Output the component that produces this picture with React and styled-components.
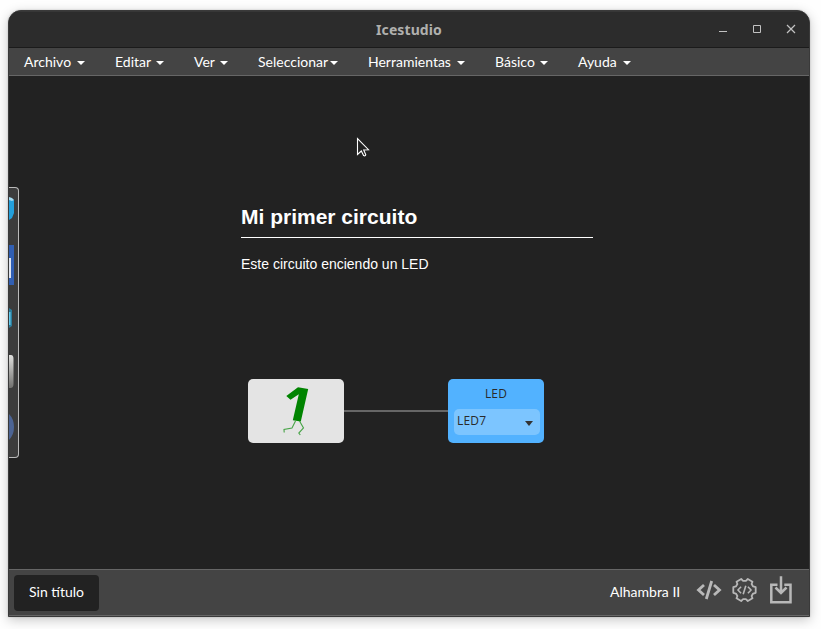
import React from "react";
import styled, { createGlobalStyle } from "styled-components";

const GlobalStyle = createGlobalStyle`
  * { box-sizing: border-box; }
  body {
    margin: 0;
    background: #fefefe;
    overflow: hidden;
    font-family: Lato, sans-serif;
    font-size: 14px;
    color: #fff;
  }
`;

const Desktop = styled.div`
  width: 821px;
  height: 629px;
  padding: 10px 11px 12px 8px;
`;

const Window = styled.main`
  display: flex;
  flex-direction: column;
  width: 802px;
  height: 607px;
  overflow: hidden;
  border: 1px solid #3a3a3a;
  border-radius: 13px 13px 0 0;
  background: #222;
  box-shadow: 0 3px 12px rgba(0, 0, 0, 0.22), 0 0 2px rgba(0, 0, 0, 0.2);
`;

const TitleBar = styled.header`
  display: grid;
  grid-template-columns: 1fr auto 1fr;
  align-items: center;
  height: 37px;
  flex: none;
  background: #2c2c2c;
  border-top: 1px solid #373737;
  border-bottom: 1px solid #1b1b1b;
`;

const WindowTitle = styled.h1`
  grid-column: 2;
  margin: 0;
  font: 700 14px/20px "Noto Sans", sans-serif;
  letter-spacing: 0.1px;
  color: #b0b0ae;
`;

const WindowControls = styled.div`
  display: flex;
  justify-content: flex-end;
  gap: 20px;
  padding-right: 11px;
  margin-top: -2px;
`;

const MenuBar = styled.nav`
  display: flex;
  align-items: center;
  gap: 30px;
  height: 28px;
  flex: none;
  padding-left: 15px;
  background: #444;
  border-bottom: 1px solid #666;
`;

const MenuItem = styled.div`
  display: flex;
  align-items: center;
  justify-content: space-between;
  width: ${(p) => p.$width}px;
  line-height: 20px;
  white-space: nowrap;
`;

const Caret = styled.span`
  width: 0;
  height: 0;
  flex: none;
  margin-top: 2px;
  border: 4px solid transparent;
  border-top-color: ${(p) => p.$color || "#fff"};
  border-bottom: 0;
`;

const Canvas = styled.section`
  position: relative;
  flex: 1;
  background: #222;
`;

const Drawer = styled.aside`
  position: absolute;
  left: 0;
  top: 111px;
  width: 10px;
  height: 271px;
  border: 1px solid #bbb;
  border-left: 0;
  border-radius: 0 4px 4px 0;
  background: #3c3c3c;
  overflow: hidden;
`;

const Note = styled.article`
  position: absolute;
  left: 232px;
  top: 129px;
  width: 352px;
  font-family: "Liberation Sans", Arial, sans-serif;
`;

const NoteHeading = styled.h2`
  margin: 0;
  padding-bottom: 8px;
  border-bottom: 1px solid #fff;
  font-size: 21px;
  line-height: 24px;
`;

const NoteText = styled.p`
  margin: 16px 0 0;
  font-size: 14px;
  line-height: 20px;
`;

const Wire = styled.div`
  position: absolute;
  left: 335px;
  top: 334px;
  width: 104px;
  height: 2px;
  background: #666;
`;

const Block = styled.div`
  position: absolute;
  left: ${(p) => p.$left}px;
  top: 303px;
  width: 96px;
  height: 64px;
  padding: 5px;
  border-radius: 5px;
  background: ${(p) => p.$color};
  font-family: "Open Sans", sans-serif;
  font-size: 12px;
  letter-spacing: 0.2px;
  color: #2a2a2a;
`;

const BlockLabel = styled.div`
  height: 20px;
  line-height: 20px;
  text-align: center;
`;

const PinSelect = styled.div`
  display: flex;
  align-items: center;
  justify-content: space-between;
  width: 86px;
  height: 26px;
  margin: 5px 0 0 1px;
  padding: 0 7px 3px 3px;
  border-radius: 5px;
  background: #7cc5ff;
`;

const PinArrow = styled(Caret)`
  margin-top: 5px;
  border-top-width: 5px;
`;

const Pointer = styled.svg`
  position: absolute;
  left: 347px;
  top: 61px;
`;

const Footer = styled.footer`
  display: flex;
  align-items: center;
  justify-content: space-between;
  height: 47px;
  flex: none;
  padding: 0 17px 0 5px;
  background: #444;
  border-top: 1px solid #666;
  border-bottom: 1px solid #666;
`;

const ProjectTab = styled.div`
  width: 85px;
  height: 36px;
  border-radius: 4px;
  background: #222;
  line-height: 34px;
  text-align: center;
`;

const Tools = styled.div`
  display: flex;
  align-items: center;
  height: 100%;
`;

const BoardName = styled.span`
  width: 70px;
  margin: 0 16px 1px 0;
  line-height: 20px;
  white-space: nowrap;
`;

const ToolIcon = styled.svg`
  display: block;
  flex: none;
  margin-right: ${(p) => p.$gap || 0}px;
  margin-bottom: 6px;
`;

const MENUS = [
  ["Archivo", 61],
  ["Editar", 49],
  ["Ver", 34],
  ["Seleccionar", 80],
  ["Herramientas", 97],
  ["Básico", 53],
  ["Ayuda", 53],
];

function Controls() {
  return (
    <WindowControls>
      <svg width="14" height="14" fill="none" stroke="#c2c2c2">
        <path d="M3 9.5h8" />
      </svg>
      <svg width="14" height="14" fill="none" stroke="#c2c2c2">
        <path d="M3.5 3.5h7v7h-7z" />
      </svg>
      <svg width="14" height="14" fill="none" stroke="#c2c2c2" strokeWidth="1.2">
        <path d="M3 3l8 8M11 3l-8 8" />
      </svg>
    </WindowControls>
  );
}

function DrawerIcons() {
  return (
    <svg width="9" height="269" viewBox="0 0 9 269" display="block">
      <defs>
        <linearGradient id="metal" x2="0" y2="1">
          <stop stopColor="#e0e0de" />
          <stop offset="1" stopColor="#70706e" />
        </linearGradient>
      </defs>
      <path d="M0 10l5 2v13l-2 5-3 2z" fill="#23a0dc" />
      <path d="M0 9l3 1 2 2-2 1-3-1z" fill="#a4daf0" />
      <path d="M0 57h5v40h-5z" fill="#315fb3" />
      <path d="M0 70h2v20h-2z" fill="#dfe4ee" />
      <path d="M0 120l3 2v16l-3 2z" fill="#2c7d9c" />
      <path d="M0 124h1.5v13h-1.5z" fill="#65cdf0" />
      <path d="M-3 167h5q2.500 0 2.500 4v25q0 4-3 4h-5z" fill="url(#metal)" />
      <path d="M0 226q5 5 5 13t-5 13z" fill="#4c6494" />
    </svg>
  );
}

function RunningOne() {
  return (
    <svg width="86" height="56" viewBox="5 5 86 56" display="block">
      <path
        d="M38.300 17L50 8.200l10.200 1.800-7.400 32.500-8-1.300L50.800 15.200l-8.300 5.500z"
        fill="#008400"
      />
      <path
        d="M47.500 42l-3.500 7-8 1.500.2 3M51.500 42l4 7-4.700 5 1.500 2"
        fill="none"
        stroke="#46a346"
        strokeWidth="1.1"
      />
    </svg>
  );
}

export default function App() {
  return (
    <Desktop>
      <GlobalStyle />
      <Window>
        <TitleBar>
          <WindowTitle>Icestudio</WindowTitle>
          <Controls />
        </TitleBar>
        <MenuBar>
          {MENUS.map(([label, width]) => (
            <MenuItem key={label} $width={width}>
              {label}
              <Caret />
            </MenuItem>
          ))}
        </MenuBar>
        <Canvas>
          <Drawer>
            <DrawerIcons />
          </Drawer>
          <Note>
            <NoteHeading>Mi primer circuito</NoteHeading>
            <NoteText>Este circuito enciendo un LED</NoteText>
          </Note>
          <Wire />
          <Block $left={239} $color="#e4e4e4">
            <RunningOne />
          </Block>
          <Block $left={439} $color="#52b2ff">
            <BlockLabel>LED</BlockLabel>
            <PinSelect>
              LED7
              <PinArrow $color="#333" />
            </PinSelect>
          </Block>
          <Pointer width="16" height="22">
            <path
              d="M1.500 1.500v16l3.800-3.500 2.300 4.500q1.800 1 2.200-.8L7.700 13l4.800-.3z"
              fill="#222"
              stroke="#fff"
              strokeWidth="1.1"
            />
          </Pointer>
        </Canvas>
        <Footer>
          <ProjectTab>Sin título</ProjectTab>
          <Tools>
            <BoardName>Alhambra II</BoardName>
            <ToolIcon $gap={10} width="26" height="22" fill="none" stroke="#b8b8b8" strokeWidth="2.800">
              <path d="M8 6L2.500 11 8 16M18 6l5.500 5L18 16M15.700 2l-5.400 18" />
            </ToolIcon>
            <ToolIcon $gap={13} width="25" height="26" viewBox="-12.500 -13 25 26" fill="none" stroke="#b8b8b8" strokeWidth="1.800" strokeLinejoin="round">
              <path d="M11.200-2.800V2.800L8.600 3.600 7.100 6 8 8.300 3.300 11 1.400 9.200H-1.400L-3.300 11-8 8.300-7.100 6-8.600 3.600-11.200 2.800V-2.800L-8.600-3.600-7.100-6-8-8.300-3.300-11-1.400-9.200H1.400L3.300-11 8-8.300 7.100-6 8.600-3.600Z" />
              <path d="M-3.400-3.200L-6.600 0l3.200 3.200M3.400-3.200L6.600 0 3.400 3.200M1.300-4.300l-2.600 8.600" strokeWidth="1.600" />
            </ToolIcon>
            <ToolIcon width="22" height="28" fill="none" stroke="#b8b8b8" strokeWidth="2.500">
              <path d="M7.500 8.700H1.300v17.500h19.200V8.700h-6.200M11 .3v16M5.500 11.500l5.500 5.500 5.500-5.500" />
            </ToolIcon>
          </Tools>
        </Footer>
      </Window>
    </Desktop>
  );
}
